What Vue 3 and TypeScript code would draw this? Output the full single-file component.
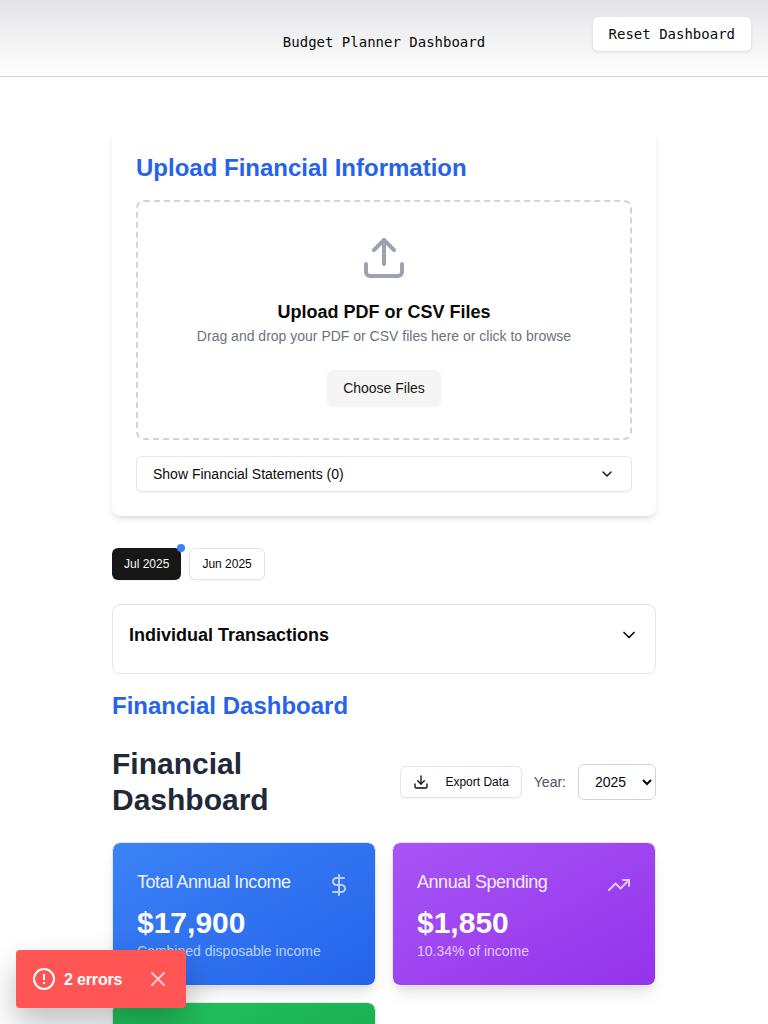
<script setup lang="ts">
import { ref } from 'vue'

interface SummaryCard {
  title: string
  value: string
  note: string
  tone: string
  icon: 'dollar' | 'trend' | 'none'
}

const months: string[] = ['Jul 2025', 'Jun 2025']
const activeMonth = ref<string>('Jul 2025')
const years: string[] = ['2025']
const year = ref<string>('2025')
const showToast = ref<boolean>(true)

const cards: SummaryCard[] = [
  { title: 'Total Annual Income', value: '$17,900', note: 'Combined disposable income', tone: 'blue', icon: 'dollar' },
  { title: 'Annual Spending', value: '$1,850', note: '10.34% of income', tone: 'purple', icon: 'trend' },
  { title: '', value: '', note: '', tone: 'green', icon: 'none' },
]
</script>

<template>
  <div class="page">
    <header class="header">
      <span class="header-title">Budget Planner Dashboard</span>
      <button class="btn reset">Reset Dashboard</button>
    </header>

    <main class="content">
      <section class="upload">
        <h2 class="heading">Upload Financial Information</h2>
        <div class="dropzone">
          <svg class="upload-icon" width="48" height="48" viewBox="0 0 24 24">
            <path d="M21 15v4a2 2 0 0 1-2 2H5a2 2 0 0 1-2-2v-4" />
            <polyline points="17 8 12 3 7 8" />
            <line x1="12" x2="12" y1="3" y2="15" />
          </svg>
          <h3 class="drop-title">Upload PDF or CSV Files</h3>
          <p class="drop-text">Drag and drop your PDF or CSV files here or click to browse</p>
          <button class="choose">Choose Files</button>
        </div>
        <button class="btn statements">
          <span>Show Financial Statements (0)</span>
          <svg width="16" height="16" viewBox="0 0 24 24"><path d="m6 9 6 6 6-6" /></svg>
        </button>
      </section>

      <nav class="months">
        <button
          v-for="m in months"
          :key="m"
          class="btn month"
          :class="{ active: m === activeMonth }"
          @click="activeMonth = m"
        >
          {{ m }}<i v-if="m === activeMonth" class="dot"></i>
        </button>
      </nav>

      <section class="transactions">
        <h3>Individual Transactions</h3>
        <svg width="20" height="20" viewBox="0 0 24 24"><path d="m6 9 6 6 6-6" /></svg>
      </section>

      <h2 class="heading section-heading">Financial Dashboard</h2>

      <div class="dash-head">
        <h2 class="dash-title">Financial Dashboard</h2>
        <div class="controls">
          <button class="btn export">
            <svg width="16" height="16" viewBox="0 0 24 24">
              <path d="M21 15v4a2 2 0 0 1-2 2H5a2 2 0 0 1-2-2v-4" />
              <polyline points="7 10 12 15 17 10" />
              <line x1="12" x2="12" y1="15" y2="3" />
            </svg>
            <span>Export Data</span>
          </button>
          <label class="year-label" for="year">Year:</label>
          <select id="year" v-model="year" class="year">
            <option v-for="y in years" :key="y" :value="y">{{ y }}</option>
          </select>
        </div>
      </div>

      <div class="cards">
        <article v-for="c in cards" :key="c.tone" class="card" :class="c.tone">
          <div class="card-top">
            <span class="card-title">{{ c.title }}</span>
            <svg v-if="c.icon === 'dollar'" width="24" height="24" viewBox="0 0 24 24">
              <line x1="12" x2="12" y1="2" y2="22" />
              <path d="M17 5H9.5a3.5 3.5 0 0 0 0 7h5a3.5 3.5 0 0 1 0 7H6" />
            </svg>
            <svg v-else-if="c.icon === 'trend'" width="24" height="24" viewBox="0 0 24 24">
              <polyline points="22 7 13.5 15.5 8.5 10.5 2 17" />
              <polyline points="16 7 22 7 22 13" />
            </svg>
          </div>
          <div class="card-value">{{ c.value }}</div>
          <p class="card-note">{{ c.note }}</p>
        </article>
      </div>
    </main>

    <div v-if="showToast" class="toast">
      <svg class="alert" width="24" height="24" viewBox="0 0 24 24">
        <circle cx="12" cy="12" r="10" />
        <line x1="12" x2="12" y1="7" y2="13" />
        <line x1="12" x2="12" y1="15" y2="17" />
      </svg>
      <span class="toast-text">2 errors</span>
      <button class="toast-close" aria-label="Close" @click="showToast = false">
        <svg width="24" height="24" viewBox="0 0 24 24">
          <path d="M18 6 6 18" />
          <path d="m6 6 12 12" />
        </svg>
      </button>
    </div>
  </div>
</template>

<style>
html,
body {
  margin: 0;
  background: #fff;
  overflow: hidden;
}
</style>

<style scoped>
* {
  box-sizing: border-box;
}
.page {
  height: 100vh;
  overflow: hidden;
  color: #0a0a0a;
  font-family: "Liberation Sans", Arial, sans-serif;
  font-size: 14px;
  line-height: 20px;
}
h2,
h3,
p {
  margin: 0;
}
svg {
  display: block;
  flex: none;
  fill: none;
  stroke: currentColor;
  stroke-width: 2;
  stroke-linecap: round;
  stroke-linejoin: round;
}
button,
select {
  font: inherit;
  color: inherit;
  margin: 0;
}
.btn {
  border: 1px solid #e5e5e5;
  border-radius: 6px;
  background: #fff;
  box-shadow: 0 1px 2px rgba(0, 0, 0, 0.05);
}
.header {
  position: relative;
  display: flex;
  justify-content: center;
  height: 77px;
  padding: 32px 0 24px;
  border-bottom: 1px solid #d1d5db;
  background: linear-gradient(to bottom, #e4e4e7, rgba(228, 228, 231, 0));
  font-family: "DejaVu Sans Mono", monospace;
}
.reset {
  position: absolute;
  top: 16px;
  right: 16px;
  height: 36px;
  padding: 0 16px;
}
.content {
  width: 544px;
  margin: 0 auto;
  padding-top: 51px;
}
.upload {
  padding: 24px;
  border-radius: 8px;
  background: #fff;
  box-shadow: 0 4px 6px -1px rgba(0, 0, 0, 0.1), 0 2px 4px -2px rgba(0, 0, 0, 0.1);
}
.heading {
  font-size: 24px;
  line-height: 32px;
  font-weight: 700;
  color: #2563eb;
}
.dropzone {
  display: flex;
  flex-direction: column;
  align-items: center;
  margin: 16px 0;
  padding: 32px;
  border: 2px dashed #d1d5db;
  border-radius: 8px;
}
.upload-icon {
  color: #9ca3af;
  margin-bottom: 16px;
}
.drop-title {
  font-size: 18px;
  line-height: 28px;
  font-weight: 600;
}
.drop-text {
  color: #6b7280;
  margin-bottom: 24px;
}
.choose {
  height: 36px;
  padding: 0 16px;
  border: 0;
  border-radius: 6px;
  background: #f5f5f5;
  color: #171717;
  box-shadow: 0 1px 2px rgba(0, 0, 0, 0.05);
}
.statements {
  display: flex;
  align-items: center;
  justify-content: space-between;
  width: 100%;
  height: 36px;
  padding: 0 16px;
}
.months {
  display: flex;
  gap: 8px;
  margin: 32px 0 24px;
}
.month {
  position: relative;
  height: 32px;
  padding: 0 12px;
  font-size: 12px;
  line-height: 16px;
}
.month.active {
  border: 0;
  background: #171717;
  color: #fafafa;
}
.dot {
  position: absolute;
  top: -4px;
  right: -4px;
  width: 8px;
  height: 8px;
  border-radius: 50%;
  background: #3b82f6;
}
.transactions {
  display: flex;
  align-items: center;
  justify-content: space-between;
  padding: 16px 16px 24px;
  border: 1px solid #e5e5e5;
  border-radius: 8px;
}
.transactions h3 {
  font-size: 18px;
  line-height: 28px;
  font-weight: 600;
}
.section-heading {
  margin: 16px 0 24px;
}
.dash-head {
  display: flex;
  align-items: center;
  justify-content: space-between;
  margin-bottom: 24px;
}
.dash-title {
  width: 200px;
  font-size: 30px;
  line-height: 36px;
  font-weight: 700;
  color: #1f2937;
}
.controls {
  display: flex;
  align-items: center;
  gap: 12px;
}
.export {
  display: flex;
  align-items: center;
  gap: 16px;
  height: 32px;
  padding: 0 12px;
  font-size: 12px;
  line-height: 16px;
}
.year-label {
  color: #4b5563;
}
.year {
  width: 78px;
  height: 36px;
  padding: 0 0 0 12px;
  border: 1px solid #d1d5db;
  border-radius: 6px;
  background: #fff;
}
.cards {
  display: grid;
  grid-template-columns: 1fr 1fr;
  gap: 16px;
}
.card {
  height: 144px;
  padding: 24px;
  border: 1px solid #e5e5e5;
  border-radius: 8px;
  background-clip: padding-box;
  color: #fff;
  box-shadow: 0 10px 15px -3px rgba(0, 0, 0, 0.1), 0 4px 6px -4px rgba(0, 0, 0, 0.1);
}
.blue {
  --soft: #dbeafe;
  background-image: linear-gradient(to bottom right, #3b82f6, #2563eb);
}
.purple {
  --soft: #f3e8ff;
  background-image: linear-gradient(to bottom right, #a855f7, #9333ea);
}
.green {
  background-image: linear-gradient(to bottom right, #22c55e, #16a34a);
}
.card-top {
  display: flex;
  align-items: center;
  justify-content: space-between;
  height: 36px;
  margin-bottom: 2px;
}
.card-top svg {
  color: var(--soft);
  opacity: 0.8;
}
.card-title {
  padding-bottom: 6px;
  font-size: 18px;
  line-height: 28px;
  letter-spacing: -0.45px;
  opacity: 0.9;
}
.card-value {
  font-size: 30px;
  line-height: 36px;
  font-weight: 700;
}
.card-note {
  color: var(--soft);
  opacity: 0.8;
}
.toast {
  position: absolute;
  left: 16px;
  bottom: 16px;
  display: flex;
  align-items: center;
  width: 170px;
  height: 58px;
  padding: 0 16px;
  border-radius: 4px;
  background: #ff5555;
  color: #fff;
  box-shadow: 0 16px 32px rgba(0, 0, 0, 0.25);
}
.alert {
  stroke-linecap: butt;
}
.toast-text {
  margin-left: 8px;
  padding-top: 1px;
  font-size: 16px;
  font-weight: 600;
  letter-spacing: -0.16px;
}
.toast-close {
  margin-left: auto;
  padding: 0;
  border: 0;
  background: none;
  opacity: 0.7;
}
</style>
